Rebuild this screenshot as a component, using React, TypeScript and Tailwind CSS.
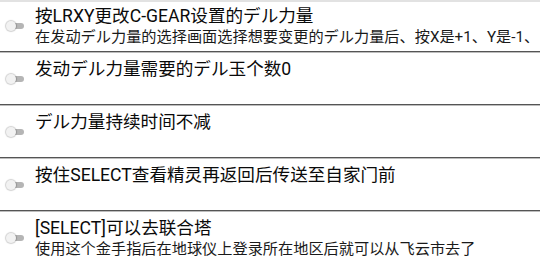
import React from "react";

type Item = { title: string; sub?: string };

const items: Item[] = [
  {
    title: "按LRXY更改C-GEAR设置的デル力量",
    sub: "在发动デル力量的选择画面选择想要变更的デル力量后、按X是+1、Y是-1、",
  },
  { title: "发动デル力量需要的デル玉个数0" },
  { title: "デル力量持续时间不减" },
  { title: "按住SELECT查看精灵再返回后传送至自家门前" },
  {
    title: "[SELECT]可以去联合塔",
    sub: "使用这个金手指后在地球仪上登录所在地区后就可以从飞云市去了",
  },
];

function Toggle() {
  return (
    <div className="relative w-[20px] h-[12px]">
      <div className="absolute left-[6px] top-[3px] w-[12px] h-[6px] rounded-full bg-[#b5b5b5]" />
      <div className="absolute left-0 top-[1px] w-[10px] h-[10px] rounded-full bg-[#f2f2f2] shadow-[0_0_1px_1px_rgba(0,0,0,0.18)]" />
    </div>
  );
}

function Row({ item }: { item: Item }) {
  return (
    <div className="flex flex-col">
      <div className="flex h-[51px] items-center">
        <div className="w-[35px] shrink-0 flex justify-start pl-[6px]">
          <Toggle />
        </div>
        <div className="flex-1 min-w-0 self-start pt-[5px] overflow-hidden">
          <div className="text-[17.6px] leading-[22px] text-[#0a0a0a] whitespace-nowrap">
            {item.title}
          </div>
          {item.sub && (
            <div className="text-[15.2px] leading-[20px] text-[#1a1a1a] whitespace-nowrap">
              {item.sub}
            </div>
          )}
        </div>
      </div>
      <div className="h-[1px] bg-[#555555]" />
      <div className="h-[1px] bg-[#bdbdbd]" />
    </div>
  );
}

export default function App() {
  return (
    <div
      className="w-[540px] h-[259px] overflow-hidden bg-white relative"
      style={{ fontFamily: "Roboto, 'Noto Sans CJK SC', sans-serif" }}
    >
      <div className="absolute left-0 top-0 w-full h-[2px] bg-[#e2e2e2]" />
      {items.map((it, i) => (
        <Row key={i} item={it} />
      ))}
    </div>
  );
}
